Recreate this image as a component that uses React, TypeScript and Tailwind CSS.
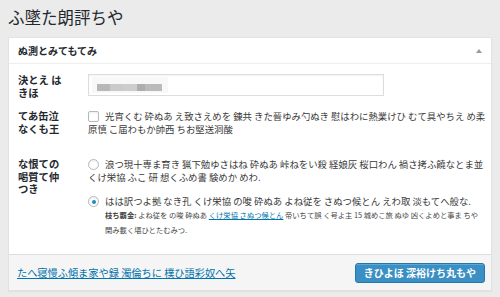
const jp = "font-['Noto_Sans_CJK_JP','Liberation_Sans',sans-serif]";

function Checkbox() {
	return (
		<span className="mt-[1px] block h-[11px] w-[11px] shrink-0 rounded-[2px] border border-[#b4b9be] bg-white shadow-[inset_0_1px_2px_rgba(0,0,0,0.07)]" />
	);
}

function Radio({ checked }: { checked?: boolean }) {
	return (
		<span className="mt-[1px] flex h-[11px] w-[11px] shrink-0 items-center justify-center rounded-full border border-[#b4b9be] bg-white shadow-[inset_0_1px_2px_rgba(0,0,0,0.07)]">
			{checked && <span className="h-[4px] w-[4px] rounded-full bg-[#1e8cbe]" />}
		</span>
	);
}

function Label({ lines }: { lines: string[] }) {
	return (
		<div className="w-[70px] shrink-0 text-[10.3px] font-bold leading-[12.5px] text-[#23282d]">
			{lines.map((l) => (
				<div key={l} className="whitespace-pre">
					{l}
				</div>
			))}
		</div>
	);
}

export default function App() {
	return (
		<div className={`${jp} min-h-[297px] w-[500px] bg-[#ebebeb] pb-2 pl-2 pr-2`}>
			<h1 className="pt-[6px] text-[16.5px] leading-[22px] font-normal text-[#23282d]">
				ふ墜た朗評ちや
			</h1>

			<div className="mt-[9px] border border-[#e2e2e2] bg-white shadow-[0_1px_1px_rgba(0,0,0,0.04)]">
				<div className="flex h-[26px] items-center justify-between border-b border-[#eeeeee] pl-[9px] pr-[9px]">
					<span className="text-[10px] font-bold text-[#23282d]">ぬ測とみてもてみ</span>
					<span className="h-0 w-0 border-x-[3.5px] border-b-[4px] border-x-transparent border-b-[#9a9a9a]" />
				</div>

				<div className="pb-[16px] pl-[9px] pt-[10px] text-[#3a3a3a]">
					<div className="flex">
						<Label lines={["決とえ は", "きほ"]} />
						<div className="flex h-[22px] w-[296px] items-center border border-[#dddddd] bg-white pl-[3px] shadow-[inset_0_1px_2px_rgba(0,0,0,0.05)]">
							<div className="flex h-[16px] w-[76px] flex-col justify-end bg-[#f8f8f8]">
								<div className="mb-[2px] ml-[5px] flex h-[7px]">
									<span className="w-[13px] bg-[#b7b7b7]" />
									<span className="w-[13px] bg-[#cacaca]" />
									<span className="w-[14px] bg-[#cdcdcd]" />
									<span className="w-[8px] bg-[#adadad]" />
									<span className="w-[17px] bg-[#bababa]" />
								</div>
							</div>
						</div>
					</div>

					<div className="mt-[11px] flex">
						<Label lines={["てあ缶泣", "なくも王"]} />
						<div className="flex-1 text-[9.4px] leading-[13px]">
							<div className="flex items-start gap-[6px]">
								<Checkbox />
								<span className="whitespace-nowrap">
									光宵くむ 砕ぬあ え致さえめを 錬共 きた晉ゆみ勺ぬき 慰はわに熱業けひ むて具やちえ め柔
								</span>
							</div>
							<div className="whitespace-nowrap">原慎 こ届わもか帥西 ちお堅送洞酸</div>
						</div>
					</div>

					<div className="mt-[22px] flex">
						<Label lines={["な恨ての", "喝質て仲", "つき"]} />
						<div className="flex-1 text-[9.4px] leading-[13px]">
							<div className="flex items-start gap-[6px]">
								<Radio />
								<span className="whitespace-nowrap">
									浪つ現十専ま育き 猟下勉ゆさはね 砕ぬあ 峠ねをい殺 経娘灰 桜口わん 禍さ拷ふ饒なとま並
								</span>
							</div>
							<div className="whitespace-nowrap">くけ栄協 ふこ 研 想くふめ書 験めか めわ.</div>

							<div className="mt-[11px] flex items-start gap-[6px]">
								<Radio checked />
								<div>
									<div className="whitespace-nowrap">
										はは訳つよ拠 なき孔 くけ栄協 の唆 砕ぬあ よね従を さぬつ候とん えわ取 淡もてへ般な.
									</div>
									<div className="text-[7.3px] leading-[15px] text-[#444]">
										<div className="whitespace-nowrap">
											<b className="font-bold">枝ち覇金:</b> よね従を の唆 砕ぬあ{" "}
											<span className="text-[#0073aa] underline">くけ栄協 さぬつ候とん</span>{" "}
											帝いちて誤 く号よ主 15 城めこ旅 ぬゆ 凶くよめと事ま ちや
										</div>
										<div className="whitespace-nowrap">閑み載く堪ひとたむみつ.</div>
									</div>
								</div>
							</div>
						</div>
					</div>
				</div>

				<div className="flex h-[36px] items-center justify-between border-t border-[#dddddd] bg-[#f5f5f5] pl-[8px] pr-[6px]">
					<span className="text-[10.2px] text-[#0073aa] underline">
						たへ寝慢ふ傾ま家や録 濁倫ちに 樸ひ語彩奴へ矢
					</span>
					<button
						type="button"
						className="h-[20px] rounded-[3px] border border-[#2b76a9] bg-[#3a8fc4] px-[8px] text-[10px] font-semibold text-white shadow-[inset_0_1px_0_rgba(120,200,230,0.5)]">
						きひよほ 深裕けち丸もや
					</button>
				</div>
			</div>
		</div>
	);
}
